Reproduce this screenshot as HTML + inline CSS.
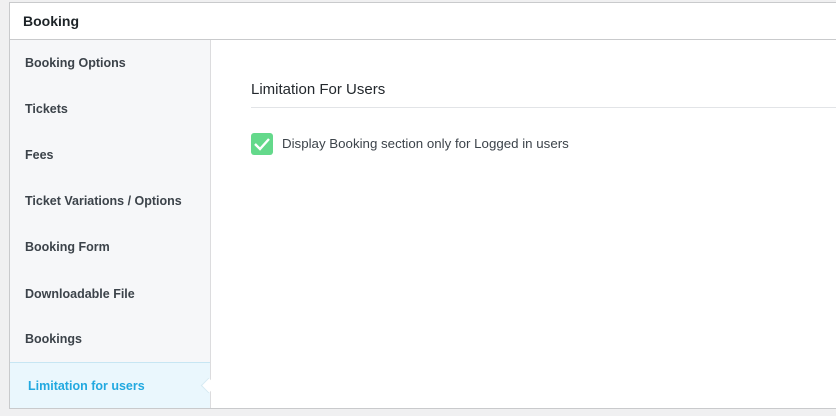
<!DOCTYPE html>
<html><head><style>
body{margin:0;width:836px;height:416px;background:#f0f0f1;font-family:"Liberation Sans",sans-serif;overflow:hidden;position:relative}
.box{position:absolute;left:9px;top:2px;width:840px;height:405px;background:#fff;border:1px solid #c9cacc}
.hdr{position:absolute;left:0;top:0;right:0;height:36px;border-bottom:1px solid #c9cacc;font-size:14px;font-weight:bold;color:#1d2327;line-height:36px;padding-left:13px}
.side{position:absolute;left:0;top:37px;width:200px;height:368px;background:#f6f7f9;border-right:1px solid #dcdcde}
.it{height:46px;line-height:46px;padding-left:15px;font-size:12.5px;font-weight:bold;color:#3c434a}
.act{position:absolute;left:0;top:322px;width:200px;height:46px;background:#eaf7fd;border-top:1px solid #c7e6f3;color:#22a9e0;padding-left:18px;box-sizing:border-box;line-height:46px;font-size:12.5px;font-weight:bold}
.arr{position:absolute;left:193px;top:17px;width:10px;height:10px;background:#fff;transform:rotate(45deg);border-left:1px solid #d6eaf3;border-bottom:1px solid #d6eaf3}
h3{position:absolute;left:241px;top:78px;margin:0;font-size:15px;font-weight:normal;color:#23282d}
.line{position:absolute;left:241px;top:104px;width:600px;height:1px;background:#e2e4e7}
.cb{position:absolute;left:241px;top:130px;width:22px;height:22px;background:#64d98b;border-radius:3px}
.lbl{position:absolute;left:272px;top:133px;font-size:13.3px;color:#3c434a}
</style></head><body>
<div class="box">
<div class="hdr">Booking</div>
<div class="side">
<div class="it">Booking Options</div>
<div class="it">Tickets</div>
<div class="it">Fees</div>
<div class="it">Ticket Variations / Options</div>
<div class="it">Booking Form</div>
<div class="it" style="line-height:48px">Downloadable File</div>
<div class="it">Bookings</div>
<div class="act">Limitation for users<div class="arr"></div></div>
</div>
<h3>Limitation For Users</h3>
<div class="line"></div>
<div class="cb"><svg width="22" height="22" viewBox="0 0 22 22"><path d="M4 11 L9 16 L18 6" fill="none" stroke="#fff" stroke-width="2.4"/></svg></div>
<div class="lbl">Display Booking section only for Logged in users</div>
</div>
</body></html>
